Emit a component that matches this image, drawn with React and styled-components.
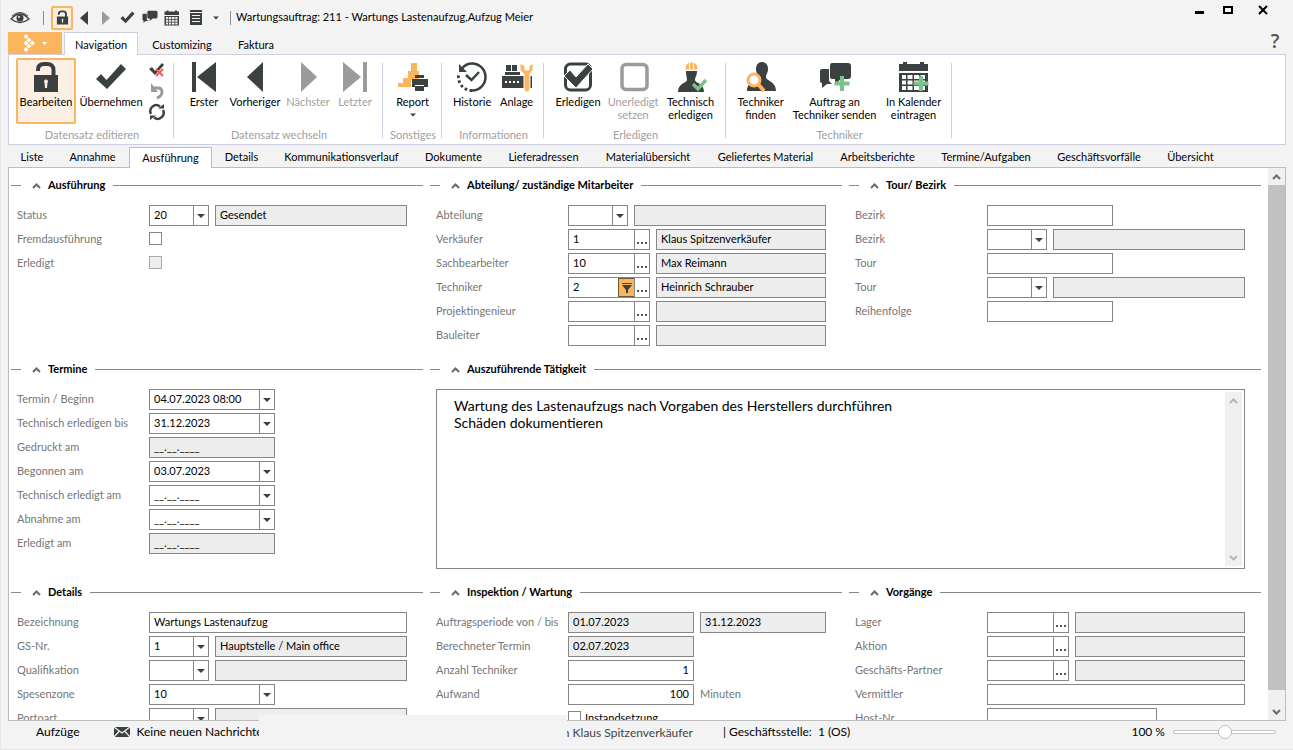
import React, { useId } from "react";
import styled, { createGlobalStyle, css } from "styled-components";

const ink = "#3a4140";
const mute = "#9b9b9b";
const orange = "#fbb55c";
const green = "#7cc387";
const line = "#868686";
const lilac = "#cfcfe2";

const GlobalStyle = createGlobalStyle`
  * { box-sizing: border-box; }
  body { margin: 0; background: #f3f3f3; }
  body, button, input, select, textarea {
    font-family: Lato, "Liberation Sans", sans-serif;
    font-size: 11px;
    color: #000;
  }
  button { border: 0; padding: 0; background: none; }
`;

/* ---------- icons ---------- */

const Svg = ({ w = 32, h = 32, box, children }) => (
  <svg width={w} height={h} viewBox={box || `0 0 ${w} ${h}`} fill={ink} aria-hidden="true">
    {children}
  </svg>
);

const LockArt = () => (
  <>
    <path d="M8 10V8.500C8 4.500 10.500 3 14 3h3.500C21 3 23.500 5 23.500 9v7" fill="none" stroke={ink} strokeWidth="4" />
    <path fillRule="evenodd" d="M4 14h24v17H4zM16 18.500a2 2 0 0 0-1.500 3.300L15 27h2l.5-5.200A2 2 0 0 0 16 18.500z" />
  </>
);
const checkPoints = "1,18 6,13 11.5,19 26,3 31,8 12,28";
const ChatArt = () => (
  <>
    <path d="M1 9q0-2 2-2h7v12l3 3H8l-5 4v-5q-2 0-2-2z" />
    <path d="M13 1h16q3 0 3 3v10q0 3-3 3h-7l-6 5v-5h-3q-2 0-2-2V4q0-3 2-3z" />
  </>
);
const CalendarArt = () => (
  <>
    <path d="M1 3h29v7H1zM5 1h4v4H5zM22 1h4v4h-4z" />
    <path fillRule="evenodd" d="M1 12h29v19H1zM4 14v4h4v-4zM9.500 14v4h5v-4zM16 14v4h5v-4zM22.500 14v4H27v-4zM4 19.500v4h4v-4zM9.500 19.500v4h5v-4zM16 19.500v4h5v-4zM22.500 19.500v4H27v-4zM4 25v4h4v-4zM9.500 25v4h5v-4zM16 25v4h5v-4zM22.500 25v4H27v-4z" />
  </>
);
const Plus = () => <path d="M21 15h4v5.500h5.500v4H25V30h-4v-5.500h-5.500v-4H21z" fill={green} />;
const Person = () => (
  <path d="M11 8c0-4 2-7 6-7s6 3 6 7c0 4-2 5-2 8 0 4 10 4 10 14H2c0-10 11-10 11-14 0-3-2-4-2-8z" />
);

const icons = {
  lock: <LockArt />,
  check: <polygon points={checkPoints} />,
  first: <path d="M4 1h4v30H4zM28 1v30L9 16z" />,
  prev: <path d="M24 1v30L8 16z" />,
  next: <path d="M9 1v30l16-15z" fill={mute} />,
  last: <path d="M4 1v30l18-15zM24 1h4v30h-4z" fill={mute} />,
  report: (
    <>
      <path d="M1 22h5v-5h5v-7h3V2h6v8h2v9H14v7H1z" fill={orange} />
      <path d="M18 14h9v3h-9zM15 18h16v8h-4v-2h-9v2h-3zM18 25h9v5h-9z" />
    </>
  ),
  history: (
    <>
      <path d="M16 2.500a13.500 13.500 0 0 1 0 27" fill="none" stroke={ink} strokeWidth="2.500" />
      <path d="M16 29.500A13.500 13.500 0 0 1 3 12" fill="none" stroke={ink} strokeWidth="2.800" strokeDasharray="2.600 2.400" />
      <path d="M6 7.500Q10 2.500 16 2.500" fill="none" stroke={ink} strokeWidth="2.500" />
      <path d="M3 3v8h8z" />
      <path d="M10 14l5.500 5L23 11" fill="none" stroke={ink} strokeWidth="2.500" />
    </>
  ),
  plant: (
    <>
      <path d="M5 4h5v6H5zM11 4h5v6h-5zM4 11h15v3H4z" />
      <path fillRule="evenodd" d="M1 15h30v12H1zM4 20v2h2v-2zM8 20v2h2v-2zM12 20v2h2v-2zM16 20v2h2v-2z" />
      <path d="M20 2v7l4 4v13q0 5 3 5t3-5V13l3-4V2l-4 3v4h-4V5z" transform="translate(-1)" fill={orange} stroke="#fff" />
    </>
  ),
  done: (
    <>
      <rect x="3.500" y="3" width="25" height="26" rx="5" fill="none" stroke={ink} strokeWidth="3" />
      <polygon points="2,15 8,9 14,16 26,3 31,8 14,27" stroke="#fff" />
    </>
  ),
  undone: <rect x="5" y="3.500" width="25" height="25" rx="4" fill="none" stroke={mute} strokeWidth="3.500" />,
  worker: (
    <>
      <path d="M11 10h11c0 5-2 6-2 9 0 3 9 3 9 12H3c0-9 9-9 9-12 0-3-1-4-1-9z" />
      <path d="M10 9c0-5 2-8 6.500-8S23 4 23 9z" fill={orange} stroke="#fff" />
      <path d="M14.500 2v6M18.500 2v6" stroke="#fff" />
      <path d="M18 23l5 5 8-9" fill="none" stroke={green} strokeWidth="3.500" />
    </>
  ),
  finder: (
    <>
      <Person />
      <circle cx="9" cy="19" r="6" fill="#fff" stroke={orange} strokeWidth="3" />
      <path d="M13 23l6 7" stroke={orange} strokeWidth="4" />
    </>
  ),
  send: (
    <>
      <g transform="translate(0 1)"><ChatArt /></g>
      <Plus />
    </>
  ),
  calendar: (
    <>
      <CalendarArt />
      <Plus />
    </>
  ),
};

const ChevronUp = ({ flip, color = "#6a6a6a" }) => (
  <Svg w={9} h={9}>
    <path d={flip ? "M1 3l3.500 3.500L8 3" : "M1 7l3.500-3.500L8 7"} fill="none" stroke={color} strokeWidth="2" />
  </Svg>
);
const Caret = ({ w = 8 }) => (
  <Svg w={w} h={4} box="0 0 8 4"><path d="M0 0h8L4 4z" /></Svg>
);

/* ---------- window frame ---------- */

const Window = styled.div`
  display: flex;
  flex-direction: column;
  height: 100vh;
  padding: 0 7px 1px 7px;
  background: #f3f3f3;
  border-left: 1px solid #e4e4e4;
  border-bottom: 1px solid #e4e4e4;
  overflow: hidden;
`;
const TitleBar = styled.header`
  display: flex;
  align-items: center;
  height: 32px;
  flex: none;
  padding-top: 3px;
`;
const QuickButton = styled.button`
  display: flex;
  align-items: center;
  justify-content: center;
  width: ${(p) => p.$w || 22}px;
  height: 24px;
  ${(p) => p.$active && css`
    background: #fdf0e3;
    border: 2px solid ${orange};
    border-radius: 2px;
  `}
`;
const Divider = styled.span`
  width: 1px;
  height: 14px;
  background: #8c8c8c;
  margin: 0 ${(p) => p.$right || 0}px 0 ${(p) => p.$left || 0}px;
`;
const WindowTitle = styled.h1`
  margin: 0;
  padding-bottom: 2px;
  font-size: 11px;
  font-weight: 400;
  line-height: 14px;
  flex: 1;
`;
const WindowButton = styled.button`
  display: flex;
  align-items: center;
  justify-content: center;
  width: ${(p) => p.$w}px;
  height: 20px;
  margin-bottom: 16px;
`;

const RibbonTabs = styled.nav`
  display: flex;
  height: 23px;
  flex: none;
  margin-bottom: -1px;
  z-index: 1;
`;
const FileButton = styled.button`
  display: flex;
  align-items: center;
  justify-content: center;
  gap: 7px;
  width: 54px;
  height: 22px;
  margin-right: 2px;
  background: ${orange};
`;
const RibbonTab = styled.button`
  width: ${(p) => p.$w}px;
  font-size: 11px;
  line-height: 24px;
  border: 1px solid transparent;
  border-bottom: 0;
  ${(p) => p.$active && css`
    background: #fff;
    border-color: ${lilac};
  `}
`;
const Help = styled.button`
  align-self: flex-start;
  margin-left: auto;
  width: 22px;
  height: 18px;
  font-family: "Open Sans", sans-serif;
  font-size: 19px;
  font-weight: 600;
  line-height: 18px;
  color: #555;
`;

const Ribbon = styled.div`
  display: flex;
  flex: none;
  height: 91px;
  background: #fff;
  border: 1px solid ${lilac};
`;
const Group = styled.section`
  position: relative;
  display: flex;
  flex-direction: column;
  padding: 3px 5px 0 7px;
  margin-right: 1px;
  &::after {
    content: "";
    position: absolute;
    right: -1px;
    top: 8px;
    bottom: 6px;
    width: 1px;
    background: ${lilac};
  }
`;
const GroupBody = styled.div`
  display: flex;
  height: 66px;
`;
const GroupTitle = styled.h2`
  margin: 4px 0 0;
  font-size: 11px;
  font-weight: 400;
  line-height: 14px;
  text-align: center;
  color: #a0a0a0;
`;
const BigButton = styled.button`
  display: flex;
  flex-direction: column;
  align-items: center;
  flex: none;
  width: ${(p) => p.$w}px;
  height: 66px;
  padding-top: 3px;
  line-height: 13px;
  white-space: pre;
  color: ${(p) => (p.disabled ? "#a0a0a0" : "#000")};
  border-radius: 2px;
  box-shadow: ${(p) => (p.$active ? `inset 0 0 0 2px ${orange}` : "none")};
  background: ${(p) => (p.$active ? "#fcefe4" : "none")};
  span { margin-top: 2px; }
  span + svg { margin-top: 5px; }
`;
const SmallStack = styled.div`
  display: flex;
  flex-direction: column;
  align-items: center;
  gap: 3px;
  width: 22px;
  padding-top: 3px;
`;
const SmallButton = styled.button`
  display: flex;
  width: 18px;
  height: 18px;
`;

const PageTabs = styled.nav`
  display: flex;
  flex: none;
  height: 23px;
  align-items: flex-end;
  margin-bottom: -1px;
  z-index: 1;
`;
const PageTab = styled.button`
  width: ${(p) => p.$w}px;
  height: 21px;
  padding-bottom: 2px;
  line-height: 18px;
  border: 1px solid transparent;
  border-bottom: 0;
  ${(p) => p.$active && css`
    background: #fff;
    border-color: #bdbdbd;
    padding-bottom: 0;
  `}
`;

/* ---------- form ---------- */

const Panel = styled.main`
  display: flex;
  flex: 1;
  min-height: 0;
  background: #fff;
  border: 1px solid #bdbdbd;
`;
const Form = styled.form`
  display: grid;
  grid-template-columns: repeat(3, minmax(0, 1fr));
  column-gap: 7px;
  row-gap: 13px;
  align-content: start;
  flex: 1;
  padding: 7px 7px 0 2px;
  overflow: hidden;
`;
const Block = styled.section`
  grid-column: span ${(p) => p.$span || 1};
`;
const BlockHead = styled.div`
  display: flex;
  align-items: center;
  height: 20px;
  &::before { content: ""; width: 10px; height: 1px; background: ${line}; }
  &::after { content: ""; flex: 1; height: 1px; background: ${line}; }
`;
const Toggle = styled.button`
  display: flex;
  margin: 0 7px 0 11px;
`;
const BlockTitle = styled.h3`
  margin: 0 8px 0 0;
  font-size: 11px;
  line-height: 14px;
`;
const BlockBody = styled.div`
  display: flex;
  flex-direction: column;
  gap: 3px;
  padding: 10px 16px 0 6px;
`;
const Row = styled.div`
  display: flex;
  align-items: center;
  height: 21px;
`;
const Label = styled.label`
  flex: none;
  width: 132px;
  padding-bottom: 2px;
  line-height: 14px;
  color: #767676;
`;
const Controls = styled.div`
  display: flex;
  align-items: center;
  gap: 6px;
  flex: 1;
  min-width: 0;
`;
const Frame = styled.div`
  display: ${(p) => (p.$overlay ? "grid" : "flex")};
  flex: ${(p) => (p.$w ? "none" : "1")};
  width: ${(p) => (p.$w ? `${p.$w}px` : "auto")};
  min-width: 0;
  height: 21px;
  border: 1px solid ${line};
  background: ${(p) => (p.$locked ? "#ededed" : "#fff")};
`;
const TextInput = styled.input`
  flex: 1;
  width: 100%;
  min-width: 0;
  height: 19px;
  padding: 0 4px 2px;
  border: 0;
  outline: 0;
  background: none;
  text-align: ${(p) => (p.$right ? "right" : "left")};
`;
const Dropdown = styled.select`
  grid-area: 1 / 1;
  appearance: none;
  width: 100%;
  height: 19px;
  padding: 0 4px 2px;
  border: 0;
  outline: 0;
  background: none;
`;
const ArrowCell = styled.span`
  grid-area: 1 / 1;
  justify-self: end;
  display: flex;
  align-items: center;
  justify-content: center;
  width: 15px;
  height: 19px;
  border-left: 1px solid ${line};
  pointer-events: none;
`;
const CellButton = styled.button`
  display: flex;
  align-items: center;
  justify-content: center;
  flex: none;
  width: 15px;
  height: 19px;
  border-left: 1px solid ${line};
  ${(p) => p.$hot && css`
    width: 16px;
    background: ${orange};
    border: 1px solid #66593f;
    border-right: 0;
  `}
`;
const Tick = styled.input`
  appearance: none;
  width: 13px;
  height: 13px;
  margin: 0 0 2px;
  border: 1px solid ${line};
  background: #fff;
  &:disabled { background: #ededed; border-color: #a9a9a9; }
`;
const TickLabel = styled.label`
  line-height: 14px;
  margin-left: -2px;
  padding-bottom: 2px;
`;
const Unit = styled.span`
  padding-bottom: 2px;
  line-height: 14px;
  color: #767676;
`;
const MemoFrame = styled.div`
  display: flex;
  height: 180px;
  border: 1px solid ${line};
  padding: 2px;
`;
const Memo = styled.textarea`
  flex: 1;
  border: 0;
  outline: 0;
  resize: none;
  overflow: hidden;
  padding: 5px 15px;
  font-size: 14px;
  line-height: 17px;
`;
const ScrollTrack = styled.div`
  display: flex;
  flex-direction: column;
  align-items: center;
  justify-content: space-between;
  flex: none;
  width: 17px;
  background: #f0f0f0;
`;
const ScrollArrow = styled.button`
  display: flex;
  align-items: center;
  justify-content: center;
  width: 17px;
  height: 17px;
`;
const Thumb = styled.div`
  flex: 1;
  width: 100%;
  margin-bottom: 13px;
  background: #c1c1c1;
`;

/* ---------- status bar ---------- */

const StatusBar = styled.footer`
  display: flex;
  align-items: center;
  flex: none;
  height: 27px;
  font-size: 12px;
  line-height: 16px;
  white-space: pre;
  padding-bottom: 6px;
`;
const StatusLeft = styled.div`
  display: flex;
  align-items: center;
  width: 251px;
  padding-left: 28px;
  overflow: hidden;
  svg { flex: none; margin: 0 6px 0 35px; }
`;
const StatusCover = styled.div`
  align-self: stretch;
  width: 308px;
  margin: -6px 0 0;
  background: #f3f3f3;
  z-index: 1;
`;
const StatusUser = styled.div`
  display: flex;
  justify-content: flex-end;
  width: 126px;
  margin-right: 30px;
  padding-top: 2px;
  overflow: hidden;
  color: #444;
`;
const Zoom = styled.label`
  display: flex;
  align-items: center;
  gap: 8px;
  margin-left: auto;
  margin-right: 10px;
`;
const ZoomSlider = styled.input`
  appearance: none;
  width: 103px;
  height: 14px;
  margin: 0;
  background: none;
  &::-webkit-slider-runnable-track {
    height: 4px;
    border: 1px solid #c2c2c2;
    border-radius: 2px;
    background: #fff;
  }
  &::-webkit-slider-thumb {
    appearance: none;
    width: 14px;
    height: 14px;
    margin-top: -6px;
    border: 1px solid #bdbdbd;
    border-radius: 50%;
    background: #fff;
  }
`;

/* ---------- composed parts ---------- */

const Field = ({ label, children }) => {
  const id = useId();
  const parts = React.Children.toArray(children);
  return (
    <Row>
      <Label htmlFor={id}>{label}</Label>
      <Controls>
        {parts.map((part, i) =>
          React.cloneElement(part, i === 0 ? { id } : { name: `${label} ${i + 1}` })
        )}
      </Controls>
    </Row>
  );
};
const Text = ({ id, name, w, value = "", locked, right }) => (
  <Frame $w={w} $locked={locked}>
    <TextInput id={id} aria-label={name} defaultValue={value} readOnly={locked} $right={right} />
  </Frame>
);
const Combo = ({ id, name, w = 60, value = "" }) => (
  <Frame $w={w} $overlay>
    <Dropdown id={id} aria-label={name} defaultValue={value}>
      <option value={value}>{value}</option>
    </Dropdown>
    <ArrowCell><Caret /></ArrowCell>
  </Frame>
);
const DateBox = ({ id, name, value = "__.__.____" }) => (
  <Frame $w={126}>
    <TextInput id={id} aria-label={name} defaultValue={value} />
    <CellButton type="button" aria-label="Kalender öffnen"><Caret /></CellButton>
  </Frame>
);
const Lookup = ({ id, name, value = "", filter }) => (
  <Frame $w={82}>
    <TextInput id={id} aria-label={name} defaultValue={value} />
    {filter && (
      <CellButton type="button" $hot aria-label="Filter">
        <Svg w={10} h={10}><path d="M0 0h10v1H0zM0 2h10L6 7v3H4V7z" /></Svg>
      </CellButton>
    )}
    <CellButton type="button" aria-label="Suchen">
      <Svg w={11} h={11}><path d="M0 8h2v2H0zM4 8h2v2H4zM8 8h2v2H8z" fill="#555" /></Svg>
    </CellButton>
  </Frame>
);
const TickBox = ({ id, disabled }) => <Tick type="checkbox" id={id} disabled={disabled} />;
const Note = ({ children }) => <Unit>{children}</Unit>;

const Section = ({ title, span, children }) => (
  <Block $span={span}>
    <BlockHead>
      <Toggle type="button" aria-label={`${title} einklappen`}><ChevronUp /></Toggle>
      <BlockTitle>{title}</BlockTitle>
    </BlockHead>
    <BlockBody>{children}</BlockBody>
  </Block>
);
const RibbonGroup = ({ title, items, children }) => (
  <Group>
    <GroupBody>
      {items.map(([text, icon, w, opt = {}]) => (
        <BigButton key={text} type="button" $w={w} $active={opt.active} disabled={opt.off}>
          <Svg>{icons[icon]}</Svg>
          <span>{text}</span>
          {opt.menu && <Caret w={6} />}
        </BigButton>
      ))}
      {children}
    </GroupBody>
    <GroupTitle>{title}</GroupTitle>
  </Group>
);

const pageTabs = [
  ["Liste", 48], ["Annahme", 73], ["Ausführung", 83], ["Details", 59],
  ["Kommunikationsverlauf", 141], ["Dokumente", 83], ["Lieferadressen", 97],
  ["Materialübersicht", 112], ["Geliefertes Material", 123], ["Arbeitsberichte", 101],
  ["Termine/Aufgaben", 116], ["Geschäftsvorfälle", 110], ["Übersicht", 73],
];

export default function App() {
  return (
    <Window>
      <GlobalStyle />
      <TitleBar>
        <QuickButton type="button" $w={24} aria-label="Ansicht">
          <Svg w={20} h={14}>
            <path d="M1 8Q10-2 19 8Q10 15 1 8z" fill="none" stroke={ink} strokeWidth="1.300" />
            <path d="M2 5Q10-2 18 5" fill="none" stroke={ink} />
            <circle cx="10" cy="7" r="3.500" />
            <circle cx="9" cy="6" r="1" fill="#fff" />
          </Svg>
        </QuickButton>
        <Divider $left={11} $right={7} />
        <QuickButton type="button" $active aria-label="Bearbeiten"><Svg w={15} h={15} box="0 0 32 32"><LockArt /></Svg></QuickButton>
        <QuickButton type="button" aria-label="Vorheriger"><Svg w={9} h={14}><path d="M8 0v14L0 7z" /></Svg></QuickButton>
        <QuickButton type="button" $w={20} aria-label="Nächster"><Svg w={9} h={14}><path d="M1 0v14l8-7z" fill={mute} /></Svg></QuickButton>
        <QuickButton type="button" $w={24} aria-label="Übernehmen"><Svg w={15} h={15} box="0 0 32 32">{icons.check}</Svg></QuickButton>
        <QuickButton type="button" aria-label="Nachricht"><Svg w={16} h={16} box="0 0 33 32"><ChatArt /></Svg></QuickButton>
        <QuickButton type="button" aria-label="Kalender"><Svg w={16} h={16} box="0 0 32 32"><CalendarArt /></Svg></QuickButton>
        <QuickButton type="button" $w={26} aria-label="Liste">
          <Svg w={12} h={15}><path fillRule="evenodd" d="M0 0h12v2H0zM0 3h12v12H0zM2 5v1h8V5zM2 8v1h8V8zM2 11v1h8v-1z" /></Svg>
        </QuickButton>
        <QuickButton type="button" $w={13} aria-label="Mehr"><Caret w={6} /></QuickButton>
        <Divider $left={8} $right={5} />
        <WindowTitle>Wartungsauftrag: 211 - Wartungs Lastenaufzug,Aufzug Meier</WindowTitle>
        <WindowButton type="button" $w={32} aria-label="Minimieren"><Svg w={10} h={10}><path d="M0 6h9v3H0z" fill="#000" /></Svg></WindowButton>
        <WindowButton type="button" $w={24} aria-label="Maximieren"><Svg w={10} h={10}><path d="M1 2h8v6H1z" fill="none" stroke="#000" strokeWidth="2" /></Svg></WindowButton>
        <WindowButton type="button" $w={46} aria-label="Schließen"><Svg w={10} h={10}><path d="M1 1l8 8M9 1L1 9" stroke="#000" strokeWidth="2" /></Svg></WindowButton>
      </TitleBar>

      <RibbonTabs>
        <FileButton type="button" aria-label="Datei">
          <Svg w={12} h={18}>
            <path fill="#fff" d="M3 0l2.500 2.500L3 5 .5 2.500zM6 3.500L8.500 6 6 8.500 3.500 6zM9.500 6.500L12 9l-2.500 2.500L7 9zM6 9.500L8.500 12 6 14.500 3.500 12zM3 13l2.500 2.500L3 18 .5 15.500zM3 6.500L5.500 9 3 11.500.5 9z" />
          </Svg>
          <Svg w={5} h={3}><path d="M0 0h5L2.500 3z" fill="#fff" /></Svg>
        </FileButton>
        <RibbonTab type="button" $w={74} $active>Navigation</RibbonTab>
        <RibbonTab type="button" $w={88}>Customizing</RibbonTab>
        <RibbonTab type="button" $w={60}>Faktura</RibbonTab>
        <Help type="button" aria-label="Hilfe">?</Help>
      </RibbonTabs>

      <Ribbon>
        <RibbonGroup
          title="Datensatz editieren"
          items={[["Bearbeiten", "lock", 60, { active: true }], ["Übernehmen", "check", 70]]}
        >
          <SmallStack>
            <SmallButton type="button" aria-label="Verwerfen">
              <Svg w={18} h={18}>
                <path d="M1 8l3-2 3 4 7-8 2 2-9 10z" />
                <path d="M8 8l7 7M15 8l-7 7" stroke="#ee5f5b" strokeWidth="2" />
              </Svg>
            </SmallButton>
            <SmallButton type="button" aria-label="Rückgängig">
              <Svg w={18} h={18}>
                <path d="M6 6h4q4 0 4 4 0 4-5 6" fill="none" stroke={mute} strokeWidth="3" />
                <path d="M3 1v9h7z" fill={mute} />
              </Svg>
            </SmallButton>
            <SmallButton type="button" aria-label="Aktualisieren">
              <Svg w={18} h={18}>
                <path d="M3 11a6 6 0 0 1 9-7.500M15 7a6 6 0 0 1-9 7.500" fill="none" stroke={ink} strokeWidth="2.500" />
                <path d="M10 5.500h6V1zM8 12.500H2V17z" />
              </Svg>
            </SmallButton>
          </SmallStack>
        </RibbonGroup>
        <RibbonGroup
          title="Datensatz wechseln"
          items={[["Erster", "first", 46], ["Vorheriger", "prev", 56], ["Nächster", "next", 50, { off: true }], ["Letzter", "last", 44, { off: true }]]}
        />
        <RibbonGroup title="Sonstiges" items={[["Report", "report", 45, { menu: true }]]} />
        <RibbonGroup title="Informationen" items={[["Historie", "history", 46], ["Anlage", "plant", 43]]} />
        <RibbonGroup
          title="Erledigen"
          items={[["Erledigen", "done", 54], ["Unerledigt\nsetzen", "undone", 56, { off: true }], ["Technisch\nerledigen", "worker", 59]]}
        />
        <RibbonGroup
          title="Techniker"
          items={[["Techniker\nfinden", "finder", 55], ["Auftrag an\nTechniker senden", "send", 93], ["In Kalender\neintragen", "calendar", 65]]}
        />
      </Ribbon>

      <PageTabs>
        {pageTabs.map(([text, w]) => (
          <PageTab key={text} type="button" $w={w} $active={text === "Ausführung"}>{text}</PageTab>
        ))}
      </PageTabs>

      <Panel>
        <Form>
          <Section title="Ausführung">
            <Field label="Status"><Combo value="20" /><Text value="Gesendet" locked /></Field>
            <Field label="Fremdausführung"><TickBox /></Field>
            <Field label="Erledigt"><TickBox disabled /></Field>
          </Section>
          <Section title="Abteilung/ zuständige Mitarbeiter">
            <Field label="Abteilung"><Combo /><Text locked /></Field>
            <Field label="Verkäufer"><Lookup value="1" /><Text value="Klaus Spitzenverkäufer" locked /></Field>
            <Field label="Sachbearbeiter"><Lookup value="10" /><Text value="Max Reimann" locked /></Field>
            <Field label="Techniker"><Lookup value="2" filter /><Text value="Heinrich Schrauber" locked /></Field>
            <Field label="Projektingenieur"><Lookup /><Text locked /></Field>
            <Field label="Bauleiter"><Lookup /><Text locked /></Field>
          </Section>
          <Section title="Tour/ Bezirk">
            <Field label="Bezirk"><Text w={126} /></Field>
            <Field label="Bezirk"><Combo /><Text locked /></Field>
            <Field label="Tour"><Text w={126} /></Field>
            <Field label="Tour"><Combo /><Text locked /></Field>
            <Field label="Reihenfolge"><Text w={126} /></Field>
          </Section>

          <Section title="Termine">
            <Field label="Termin / Beginn"><DateBox value="04.07.2023 08:00" /></Field>
            <Field label="Technisch erledigen bis"><DateBox value="31.12.2023" /></Field>
            <Field label="Gedruckt am"><Text w={126} value="__.__.____" locked /></Field>
            <Field label="Begonnen am"><DateBox value="03.07.2023" /></Field>
            <Field label="Technisch erledigt am"><DateBox /></Field>
            <Field label="Abnahme am"><DateBox /></Field>
            <Field label="Erledigt am"><Text w={126} value="__.__.____" locked /></Field>
          </Section>
          <Section title="Auszuführende Tätigkeit" span={2}>
            <MemoFrame>
              <Memo
                aria-label="Auszuführende Tätigkeit"
                defaultValue={"Wartung des Lastenaufzugs nach Vorgaben des Herstellers durchführen\nSchäden dokumentieren"}
              />
              <ScrollTrack>
                <ScrollArrow type="button" aria-label="Nach oben"><ChevronUp color="#b5b5b5" /></ScrollArrow>
                <ScrollArrow type="button" aria-label="Nach unten"><ChevronUp flip color="#b5b5b5" /></ScrollArrow>
              </ScrollTrack>
            </MemoFrame>
          </Section>

          <Section title="Details">
            <Field label="Bezeichnung"><Text value="Wartungs Lastenaufzug" /></Field>
            <Field label="GS-Nr."><Combo value="1" /><Text value="Hauptstelle / Main office" locked /></Field>
            <Field label="Qualifikation"><Combo /><Text locked /></Field>
            <Field label="Spesenzone"><Combo w={126} value="10" /></Field>
            <Field label="Portoart"><Combo /><Text locked /></Field>
          </Section>
          <Section title="Inspektion / Wartung">
            <Field label="Auftragsperiode von / bis"><Text w={126} value="01.07.2023" locked /><Text w={126} value="31.12.2023" locked /></Field>
            <Field label="Berechneter Termin"><Text w={126} value="02.07.2023" locked /></Field>
            <Field label="Anzahl Techniker"><Text w={126} value="1" right /></Field>
            <Field label="Aufwand"><Text w={126} value="100" right /><Note>Minuten</Note></Field>
            <Row>
              <Label as="span" />
              <Controls>
                <TickBox id="instandsetzung" />
                <TickLabel htmlFor="instandsetzung">Instandsetzung</TickLabel>
              </Controls>
            </Row>
          </Section>
          <Section title="Vorgänge">
            <Field label="Lager"><Lookup /><Text locked /></Field>
            <Field label="Aktion"><Lookup /><Text locked /></Field>
            <Field label="Geschäfts-Partner"><Lookup /><Text locked /></Field>
            <Field label="Vermittler"><Text /></Field>
            <Field label="Host-Nr"><Text w={170} /></Field>
          </Section>
        </Form>
        <ScrollTrack>
          <ScrollArrow type="button" aria-label="Nach oben"><ChevronUp /></ScrollArrow>
          <Thumb />
          <ScrollArrow type="button" aria-label="Nach unten"><ChevronUp flip /></ScrollArrow>
        </ScrollTrack>
      </Panel>

      <StatusBar>
        <StatusLeft>
          Aufzüge
          <Svg w={16} h={10}>
            <path d="M0 0h16v10H0z" />
            <path d="M0 0l8 6 8-6M0 10l5.500-6M16 10l-5.500-6" fill="none" stroke="#f3f3f3" strokeWidth="1.200" />
          </Svg>
          Keine neuen Nachrichten
        </StatusLeft>
        <StatusCover />
        <StatusUser>n Klaus Spitzenverkäufer</StatusUser>
        <span>| Geschäftsstelle:  1 (OS)</span>
        <Zoom>
          100 %
          <ZoomSlider type="range" min="0" max="200" defaultValue="100" />
        </Zoom>
      </StatusBar>
    </Window>
  );
}
